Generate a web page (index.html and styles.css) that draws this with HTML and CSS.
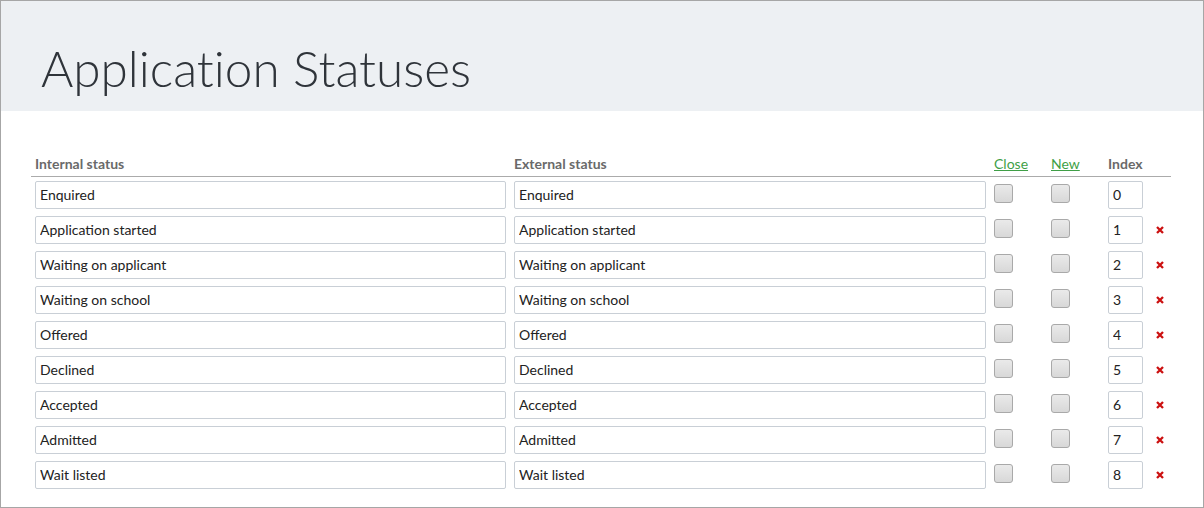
FILE: index.html
```html
<!DOCTYPE html>
<html lang="en">
<head>
  <meta charset="UTF-8">
  <title>Application Statuses</title>
  <link rel="stylesheet" href="styles.css">
</head>
<body>
  <div class="page">
    <div class="page-header">
      <h1>Application Statuses</h1>
    </div>

    <div class="content">
      <table class="status-table">
        <colgroup>
          <col class="col-internal">
          <col class="col-external">
          <col class="col-check">
          <col class="col-check">
          <col class="col-index">
          <col class="col-remove">
        </colgroup>
        <thead>
          <tr>
            <th>Internal status</th>
            <th>External status</th>
            <th><a href="#" class="sort-link">Close</a></th>
            <th><a href="#" class="sort-link">New</a></th>
            <th>Index</th>
            <th></th>
          </tr>
        </thead>
        <tbody>
          <tr>
            <td><input class="text-input" type="text" value="Enquired"></td>
            <td><input class="text-input" type="text" value="Enquired"></td>
            <td><input class="check" type="checkbox"></td>
            <td><input class="check" type="checkbox"></td>
            <td><input class="text-input index-input" type="text" value="0"></td>
            <td></td>
          </tr>
          <tr>
            <td><input class="text-input" type="text" value="Application started"></td>
            <td><input class="text-input" type="text" value="Application started"></td>
            <td><input class="check" type="checkbox"></td>
            <td><input class="check" type="checkbox"></td>
            <td><input class="text-input index-input" type="text" value="1"></td>
            <td><a href="#" class="remove" title="Remove"><svg width="8" height="8" viewBox="0 0 8 8"><path d="M1 1L7 7M7 1L1 7"/></svg></a></td>
          </tr>
          <tr>
            <td><input class="text-input" type="text" value="Waiting on applicant"></td>
            <td><input class="text-input" type="text" value="Waiting on applicant"></td>
            <td><input class="check" type="checkbox"></td>
            <td><input class="check" type="checkbox"></td>
            <td><input class="text-input index-input" type="text" value="2"></td>
            <td><a href="#" class="remove" title="Remove"><svg width="8" height="8" viewBox="0 0 8 8"><path d="M1 1L7 7M7 1L1 7"/></svg></a></td>
          </tr>
          <tr>
            <td><input class="text-input" type="text" value="Waiting on school"></td>
            <td><input class="text-input" type="text" value="Waiting on school"></td>
            <td><input class="check" type="checkbox"></td>
            <td><input class="check" type="checkbox"></td>
            <td><input class="text-input index-input" type="text" value="3"></td>
            <td><a href="#" class="remove" title="Remove"><svg width="8" height="8" viewBox="0 0 8 8"><path d="M1 1L7 7M7 1L1 7"/></svg></a></td>
          </tr>
          <tr>
            <td><input class="text-input" type="text" value="Offered"></td>
            <td><input class="text-input" type="text" value="Offered"></td>
            <td><input class="check" type="checkbox"></td>
            <td><input class="check" type="checkbox"></td>
            <td><input class="text-input index-input" type="text" value="4"></td>
            <td><a href="#" class="remove" title="Remove"><svg width="8" height="8" viewBox="0 0 8 8"><path d="M1 1L7 7M7 1L1 7"/></svg></a></td>
          </tr>
          <tr>
            <td><input class="text-input" type="text" value="Declined"></td>
            <td><input class="text-input" type="text" value="Declined"></td>
            <td><input class="check" type="checkbox"></td>
            <td><input class="check" type="checkbox"></td>
            <td><input class="text-input index-input" type="text" value="5"></td>
            <td><a href="#" class="remove" title="Remove"><svg width="8" height="8" viewBox="0 0 8 8"><path d="M1 1L7 7M7 1L1 7"/></svg></a></td>
          </tr>
          <tr>
            <td><input class="text-input" type="text" value="Accepted"></td>
            <td><input class="text-input" type="text" value="Accepted"></td>
            <td><input class="check" type="checkbox"></td>
            <td><input class="check" type="checkbox"></td>
            <td><input class="text-input index-input" type="text" value="6"></td>
            <td><a href="#" class="remove" title="Remove"><svg width="8" height="8" viewBox="0 0 8 8"><path d="M1 1L7 7M7 1L1 7"/></svg></a></td>
          </tr>
          <tr>
            <td><input class="text-input" type="text" value="Admitted"></td>
            <td><input class="text-input" type="text" value="Admitted"></td>
            <td><input class="check" type="checkbox"></td>
            <td><input class="check" type="checkbox"></td>
            <td><input class="text-input index-input" type="text" value="7"></td>
            <td><a href="#" class="remove" title="Remove"><svg width="8" height="8" viewBox="0 0 8 8"><path d="M1 1L7 7M7 1L1 7"/></svg></a></td>
          </tr>
          <tr>
            <td><input class="text-input" type="text" value="Wait listed"></td>
            <td><input class="text-input" type="text" value="Wait listed"></td>
            <td><input class="check" type="checkbox"></td>
            <td><input class="check" type="checkbox"></td>
            <td><input class="text-input index-input" type="text" value="8"></td>
            <td><a href="#" class="remove" title="Remove"><svg width="8" height="8" viewBox="0 0 8 8"><path d="M1 1L7 7M7 1L1 7"/></svg></a></td>
          </tr>
        </tbody>
      </table>
    </div>
  </div>
</body>
</html>
```

FILE: styles.css
```css
/* Base */
html, body { margin: 0; padding: 0; }
body {
  font-family: Lato, "Open Sans", Arial, sans-serif;
  font-size: 14px;
  color: #222;
  background: #fff;
}
.page {
  height: 508px;
  box-sizing: border-box;
  border: 1px solid #a6a6a6;
  overflow: hidden;
}

/* Header band */
.page-header {
  height: 110px;
  box-sizing: border-box;
  padding: 38px 40px 0;
  background-color: #edf0f3;
}
.page-header h1 {
  margin: 0;
  font-size: 49.5px;
  line-height: 58px;
  font-weight: 300;
  color: #2f343a;
  font-variant-ligatures: none;
}

/* Table */
.content { padding: 41px 30px 0; }
.status-table {
  width: 1140px;
  table-layout: fixed;
  border-collapse: collapse;
}
.col-internal { width: 479px; }
.col-external { width: 480px; }
.col-check { width: 57px; }
.col-index { width: 48px; }
.col-remove { width: 19px; }

.status-table th {
  padding: 4px;
  text-align: left;
  font-size: 14px;
  line-height: 16px;
  font-weight: 700;
  color: #6a6a6a;
  border-bottom: 1px solid #ababab;
}
.status-table td {
  padding: 4px 4px 3px;
  height: 28px;
  vertical-align: top;
}
.sort-link {
  color: #3f9f47;
  font-weight: 400;
  text-decoration: underline;
}

.text-input {
  display: block;
  width: 100%;
  height: 28px;
  box-sizing: border-box;
  margin: 0;
  padding: 0 4px 1px;
  border: 1px solid #c9cfd6;
  border-radius: 2px;
  font-family: inherit;
  font-size: 14px;
  color: #222;
  background: #fff;
}
.index-input { width: 35px; }

.check {
  -webkit-appearance: none;
  appearance: none;
  display: block;
  width: 19px;
  height: 19px;
  margin: 3px 0 0;
  border: 1px solid #a9a9a9;
  border-radius: 3px;
  background: linear-gradient(#eaeaea, #d8d8d8);
}

.remove {
  display: block;
  margin: 10px 0 0;
  width: 8px;
  height: 8px;
  line-height: 0;
}
.remove svg path {
  stroke: #cc1111;
  stroke-width: 2.3;
  fill: none;
}
```
